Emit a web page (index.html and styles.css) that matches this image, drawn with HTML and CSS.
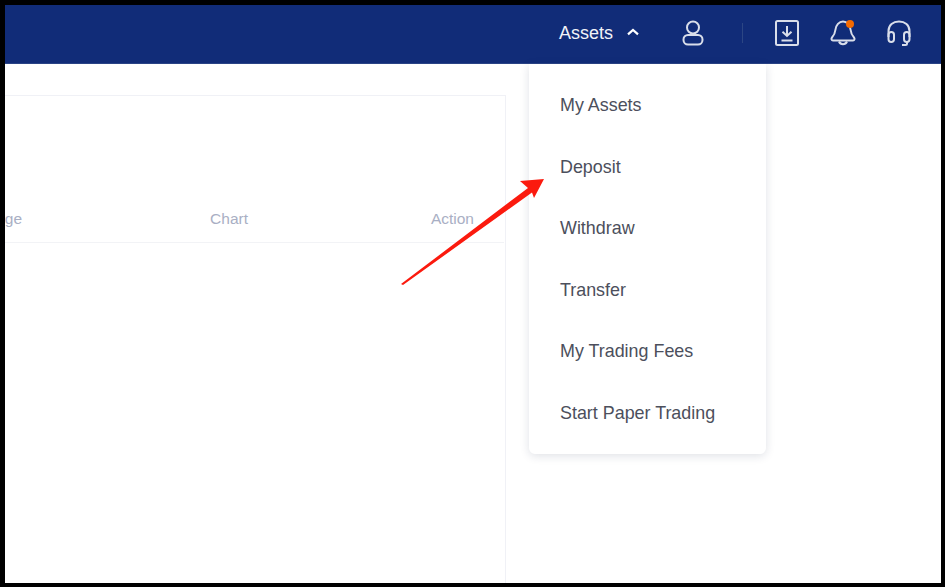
FILE: index.html
```html
<!DOCTYPE html>
<html lang="en">
<head>
<meta charset="utf-8">
<title>Assets menu</title>
<link rel="stylesheet" href="styles.css">
</head>
<body>
<div class="frame">
  <header class="topbar">
    <div class="assets">
      <span>Assets</span>
      <svg class="caret" width="12" height="8" viewBox="0 0 12 8"><path d="M1 6.400 6 2l5 4.400" fill="none" stroke="#fff" stroke-width="2.200"/></svg>
    </div>
    <svg class="icon user" width="22" height="26" viewBox="0 0 22 26" fill="none" stroke="#d9deea" stroke-width="2">
      <circle cx="11" cy="7.500" r="6"/>
      <rect x="1.500" y="15" width="19" height="9.500" rx="4.500"/>
    </svg>
    <span class="divider"></span>
    <svg class="icon download" width="24" height="26" viewBox="0 0 24 26" fill="none" stroke="#d9deea" stroke-width="2">
      <rect x="1" y="1" width="22" height="24" rx="1.500"/>
      <path d="M12 6v10M7.500 11.800 12 16l4.500-4.200M6.500 20.500h11"/>
    </svg>
    <span class="bell">
      <svg class="icon" width="26" height="26" viewBox="0 0 26 26" fill="none" stroke="#d9deea" stroke-width="2">
        <path d="M5.500 9.500C6 5 9 1.500 13 1.500S20 5 20.500 9.500c.5 4 1.500 6 3.500 8 1 1.200.5 3-1 3H3c-1.500 0-2-1.800-1-3 2-2 3-4 3.500-8z" stroke-linejoin="round"/>
        <path d="M9 21.500c1.500 3.500 6.500 3.500 8 0"/>
      </svg>
      <span class="dot"></span>
    </span>
    <svg class="icon" width="24" height="26" viewBox="0 0 24 26" fill="none" stroke="#d9deea" stroke-width="2">
      <path d="M1.500 17v-6C1.500 5 6 1.500 12 1.500S22.500 5 22.500 11v6"/>
      <rect x="1.500" y="12" width="5.500" height="10" rx="2.700"/>
      <rect x="17" y="12" width="5.500" height="10" rx="2.700"/>
      <path d="M20 22v1.500c0 .8-.7 1.500-1.500 1.500H15"/>
    </svg>
  </header>
  <main class="content">
    <section class="card">
      <div class="columns">
        <span class="col-change">Change</span>
        <span class="col-chart">Chart</span>
        <span class="col-action">Action</span>
      </div>
    </section>
  </main>
  <nav class="menu">
    <a>My Assets</a>
    <a>Deposit</a>
    <a>Withdraw</a>
    <a>Transfer</a>
    <a>My Trading Fees</a>
    <a>Start Paper Trading</a>
  </nav>
  <svg class="arrow" width="150" height="112" viewBox="0 0 150 112">
    <path d="M1 108 128 12 120 5 144 3 134 22 132 16.500 3 109z" fill="#fb1a0e"/>
  </svg>
</div>
</body>
</html>
```
FILE: styles.css
```css
* { box-sizing: border-box; }
html, body { margin: 0; height: 100%; background: #fff; }
body { overflow: hidden; font-family: "Liberation Sans", Arial, sans-serif; }
.frame {
  position: relative;
  width: 945px;
  height: 587px;
  border: solid #000;
  border-width: 5px 4px 4px 5px;
  overflow: hidden;
  display: flex;
  flex-direction: column;
  background: #fff;
}
.topbar {
  height: 59px;
  flex: none;
  background: #112c78;
  border-bottom: 1px solid #2a4385;
  display: flex;
  align-items: center;
  padding: 0 30px 2px 0;
  justify-content: flex-end;
  color: #fff;
}
.assets {
  display: flex;
  align-items: center;
  gap: 14px;
  font-size: 18px;
  color: #f1f3f8;
  margin-right: 43px;
}
.caret { margin-top: -2px; }
.icon { display: block; flex: none; }
.user { margin-right: 38px; }
.divider { width: 1px; height: 20px; background: #2c4684; margin-right: 32px; }
.download { margin-right: 31px; }
.bell { position: relative; margin-right: 31px; }
.dot {
  position: absolute;
  top: 0;
  right: 2px;
  width: 8px;
  height: 8px;
  border-radius: 50%;
  background: #f56a00;
}
.content { flex: 1; padding: 31px 435px 0 0; min-height: 0; }
.card {
  height: 100%;
  margin-left: -40px;
  border: 1px solid #f0f1f6;
  border-bottom: 0;
  padding-top: 146px;
}
.columns {
  position: relative;
  height: 0;
  font-size: 15.500px;
  color: #a9afc4;
  line-height: 16px;
}
.card::after {
  content: "";
  display: block;
  height: 1px;
  background: #f2f3f6;
  margin-right: 1px;
}
.columns span { position: absolute; top: -31px; }
.col-change { right: 483px; }
.col-chart { right: 257px; }
.col-action { right: 31px; }
.menu {
  position: absolute;
  left: 524px;
  top: 59px;
  width: 237px;
  height: 390px;
  background: #fff;
  border-radius: 0 0 6px 6px;
  box-shadow: 0 2px 10px rgba(30, 40, 80, 0.14);
  padding: 11px 31px;
  display: flex;
  flex-direction: column;
}
.menu a {
  height: 61.600px;
  line-height: 61.600px;
  font-size: 17.900px;
  color: #4c4f5c;
  white-space: nowrap;
}
.arrow { position: absolute; left: 395px; top: 171px; }
```
